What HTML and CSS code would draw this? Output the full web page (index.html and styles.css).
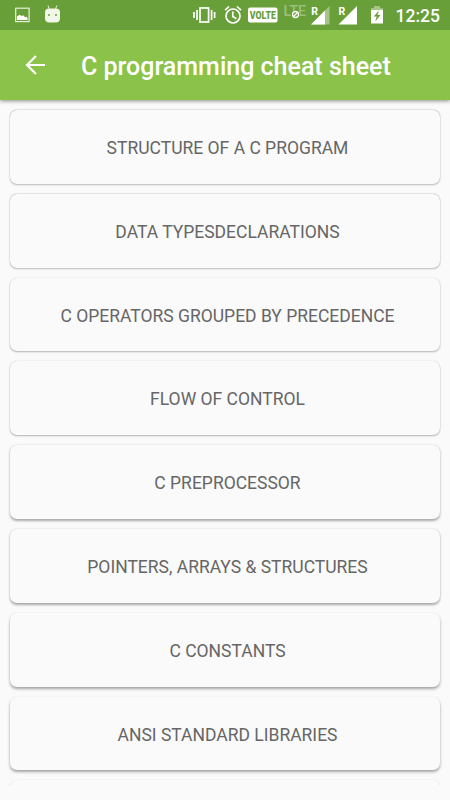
FILE: index.html
```html
<!DOCTYPE html>
<html lang="en">
<head>
<meta charset="utf-8">
<title>C programming cheat sheet</title>
<link rel="stylesheet" href="styles.css">
</head>
<body>
<header class="status">
  <svg class="status-icons" width="450" height="30" viewBox="0 0 450 30">
    <rect x="15.700" y="8.200" width="13.400" height="13.400" fill="none" stroke="#e6f0da" stroke-width="1.200"/>
    <path d="M17 20v-3.500l2.600-1.800 2.200 1.400 1.500-.8 1.800 2 1.200-.5 1.300 1.100v2.100z" fill="#fff"/>
    <path d="M49 8.600L48 5.500M55.500 8.600L57 5.500" fill="none" stroke="#e6f0da" stroke-width="1"/>
    <path d="M45 12.300Q45 8.500 49 8.500H56Q60 8.500 60 12.300V18.500Q60 22.500 55.500 22.500H49.500Q45 22.500 45 18.500z" fill="#f1f7e9"/>
    <circle cx="49" cy="15" r="1" fill="#689f38"/><circle cx="56" cy="15" r="1" fill="#689f38"/>
    <g fill="none" stroke="#fff" stroke-width="1.700">
      <rect x="200" y="8" width="8.600" height="14"/>
      <path d="M197 10v10M194 12v6M211.600 10v10M214.600 12v6"/>
      <circle cx="233" cy="16" r="7"/>
      <path d="M225 10.200l4-3.700M241 10.200l-4-3.700M232.800 11.500v5l3.600 2.300"/>
    </g>
    <rect x="248" y="7.500" width="29.500" height="15" rx="2" fill="#fff"/>
    <text class="volte" x="249.800" y="18.500" textLength="26" lengthAdjust="spacingAndGlyphs">VOLTE</text>
    <text class="lte" x="283.500" y="16" textLength="22.500" lengthAdjust="spacingAndGlyphs">LTE</text>
    <circle cx="295.500" cy="14.500" r="4.200" fill="#689f38"/>
    <circle cx="295.500" cy="14.500" r="3" fill="none" stroke="#fff" stroke-width="1.300"/>
    <path d="M293.500 16.500l4-4" stroke="#fff" stroke-width="1.200"/>
    <path d="M311 24.500L329.500 6v18.500z" fill="#a4c587"/>
    <path d="M311 24.500L325 10.500v14z" fill="#fff"/>
    <path d="M338.500 24.500L357 6v18.500z" fill="#fff"/>
    <text class="roam" x="311.200" y="15">R</text>
    <text class="roam" x="338.400" y="15">R</text>
    <path d="M371 8h3V6h6v2h3v4h-12z" fill="#a4c587"/>
    <path d="M371 10h12v13.500h-12z" fill="#fff"/>
    <path d="M379 10.500l-5.300 6h3l-1.500 5 5.300-6.500h-3z" fill="#689f38"/>
  </svg>
  <time class="clock">12:25</time>
</header>
<nav class="bar">
  <svg class="back" width="22" height="22" viewBox="0 0 22 22"><path d="M21 11H3M12 2L3 11l9 9" fill="none" stroke="#fff" stroke-width="2.200"/></svg>
  <h1 class="title">C programming cheat sheet</h1>
</nav>
<main class="list">
  <a class="card depth-1">STRUCTURE OF A C PROGRAM</a>
  <a class="card depth-1">DATA TYPESDECLARATIONS</a>
  <a class="card depth-2">C OPERATORS GROUPED BY PRECEDENCE</a>
  <a class="card depth-2">FLOW OF CONTROL</a>
  <a class="card depth-3">C PREPROCESSOR</a>
  <a class="card depth-3">POINTERS, ARRAYS &amp; STRUCTURES</a>
  <a class="card depth-4">C CONSTANTS</a>
  <a class="card depth-4">ANSI STANDARD LIBRARIES</a>
  <a class="card depth-4"></a>
</main>
</body>
</html>
```
FILE: styles.css
```css
* { box-sizing: border-box; }
body {
  margin: 0;
  width: 450px;
  height: 800px;
  overflow: hidden;
  background: #fafafa;
  font-family: Roboto, sans-serif;
}
.status {
  position: relative;
  display: flex;
  align-items: center;
  justify-content: flex-end;
  height: 30px;
  padding: 2px 10px 0 0;
  background: #689f38;
}
.status-icons { position: absolute; top: 0; left: 0; }
.volte { font: 900 10px Roboto, sans-serif; fill: #689f38; }
.lte { font: 500 14px Roboto, sans-serif; fill: #9cbf7d; }
.roam { font: 700 10.5px Roboto, sans-serif; fill: #fff; }
.clock { color: #fff; font-size: 17.5px; font-weight: 500; line-height: 28px; }
.bar {
  display: flex;
  align-items: center;
  height: 70px;
  padding: 0 24px;
  background: #8bc34a;
  box-shadow: 0 1px 4px rgba(0, 0, 0, .45);
}
.back { flex: none; margin-right: 35px; }
.title {
  margin: 3px 0 0;
  color: #fff;
  font-size: 25px;
  font-weight: 500;
  line-height: 32px;
  white-space: nowrap;
}
.list {
  display: flex;
  flex-direction: column;
  gap: 10px;
  height: 684.8px;
  padding: 10px 10px 0;
  overflow: hidden;
}
.card {
  display: flex;
  flex: none;
  align-items: center;
  justify-content: center;
  height: 73.8px;
  padding: 2.4px 0 0 5px;
  border-radius: 7px;
  background: #fafafa;
  color: #666;
  font-size: 17.5px;
  line-height: 22px;
}
.depth-1 { box-shadow: 0 0 1px rgba(0, 0, 0, .3), 0 .5px 2px rgba(0, 0, 0, .24); }
.depth-2 { box-shadow: 0 0 1px rgba(0, 0, 0, .2), 0 1px 2px rgba(0, 0, 0, .28); }
.depth-3 { box-shadow: 0 0 1px rgba(0, 0, 0, .12), 0 1.5px 2.5px rgba(0, 0, 0, .32); }
.depth-4 { box-shadow: 0 0 1px rgba(0, 0, 0, .08), 0 2px 3px rgba(0, 0, 0, .34); }
```
